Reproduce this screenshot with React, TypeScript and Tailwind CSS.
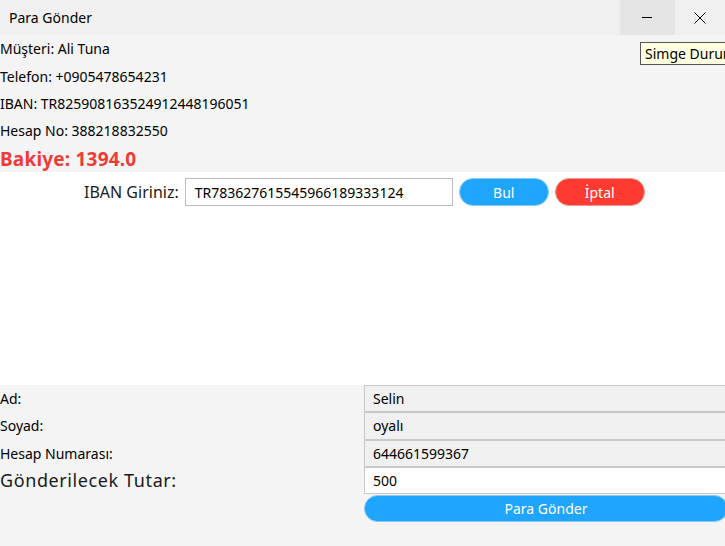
const infoRows = [
  "Müşteri: Ali Tuna",
  "Telefon: +0905478654231",
  "IBAN: TR825908163524912448196051",
  "Hesap No: 388218832550",
];

const fields = [
  { label: "Ad:", value: "Selin", big: false, editable: false },
  { label: "Soyad:", value: "oyalı", big: false, editable: false },
  { label: "Hesap Numarası:", value: "644661599367", big: false, editable: false },
  { label: "Gönderilecek Tutar:", value: "500", big: true, editable: true },
];

const App = () => {
  return (
    <div
      className="relative w-[725px] h-[546px] overflow-hidden flex flex-col text-[#000000] bg-white"
      style={{ fontFamily: '"Noto Sans", "Open Sans", sans-serif' }}
    >
      {/* title bar */}
      <div className="flex h-[35px] shrink-0 items-center bg-[#f0f0f0]">
        <span className="pl-[9px] text-[14px]">Para Gönder</span>
        <div className="ml-auto flex h-full">
          <div className="flex h-full w-[55px] items-center justify-center bg-[#e5e5e5]">
            <svg width="11" height="11" viewBox="0 0 11 11">
              <path d="M0 5.5 H10" stroke="#000" strokeWidth="1" />
            </svg>
          </div>
          <div className="flex h-full w-[50px] items-center justify-center">
            <svg width="12" height="12" viewBox="0 0 12 12">
              <path d="M0.5 0.5 L11.5 11.5 M11.5 0.5 L0.5 11.5" stroke="#000" strokeWidth="1" />
            </svg>
          </div>
        </div>
      </div>

      {/* customer info */}
      <div className="grid h-[137px] shrink-0 grid-rows-5 bg-[#f4f4f4]">
        {infoRows.map((r) => (
          <div key={r} className="flex items-center text-[14px]">{r}</div>
        ))}
        <div className="flex items-center pt-[2px] text-[19px] font-bold tracking-[0.2px] text-[#f03a37]">Bakiye: 1394.0</div>
      </div>

      {/* iban search */}
      <div className="h-[213px] shrink-0 bg-white">
        <div className="flex items-center pt-[6px]">
          <span className="ml-[84px] text-[16px] text-[#1a1a1a]">IBAN Giriniz:</span>
          <div className="ml-[6px] flex h-[28px] w-[268px] items-center border border-[#bcbcbc] pl-[9px] text-[14px]">
            TR783627615545966189333124
          </div>
          <button className="ml-[6px] h-[28px] w-[90px] rounded-full border border-[#8fc8ee] bg-[#1fa5fd] text-[14px] text-white">
            Bul
          </button>
          <button className="ml-[6px] h-[28px] w-[90px] rounded-full border border-[#e49a98] bg-[#ff3a30] text-[14px] text-white">
            İptal
          </button>
        </div>
      </div>

      {/* recipient */}
      <div className="flex-1 bg-[#f4f4f4]">
        <div className="grid grid-cols-[364px_364px]">
          {fields.map((f) => (
            <div key={f.label} className="contents">
              <div className={`flex h-[27.3px] items-center ${f.big ? "text-[18px] text-[#1a1a1a] tracking-[0.6px]" : "text-[14px]"}`}>
                {f.label}
              </div>
              <div
                className={`flex h-[27.3px] items-center border border-[#c8c8c8] pl-[8px] text-[14px] ${f.editable ? "bg-white" : "bg-[#f0f0f0]"}`}
              >
                {f.value}
              </div>
            </div>
          ))}
          <div />
          <button className="mt-[1px] h-[27px] rounded-full border border-[#8fc8ee] bg-[#1fa5fd] text-[14px] text-white">
            Para Gönder
          </button>
        </div>
      </div>

      {/* tooltip */}
      <div className="absolute left-[640px] top-[42px] flex h-[23px] items-center whitespace-nowrap border border-[#555555] bg-[#ffffe1] pl-[4px] pr-[8px] text-[14px]">
        Simge Durumuna Küçült
      </div>
    </div>
  );
};

export default App;
